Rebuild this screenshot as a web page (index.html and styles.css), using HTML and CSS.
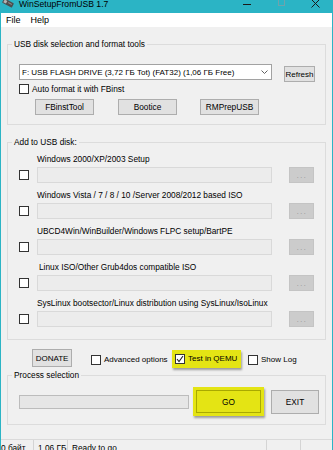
FILE: index.html
```html
<!DOCTYPE html>
<html>
<head>
<meta charset="utf-8">
<link rel="stylesheet" href="styles.css">
</head>
<body>
<div class="window">
  <div class="titlebar">
    <svg class="appicon" width="12" height="9" viewBox="0 0 12 9">
      <g transform="rotate(28 6 4)">
        <rect x="0.5" y="1.5" width="11" height="5" rx="1" fill="#4d4d4d"/>
        <rect x="1.5" y="2.5" width="3" height="3" fill="#b5b5b5"/>
        <rect x="6" y="3" width="4" height="1" fill="#8a8a8a"/>
      </g>
    </svg>
    <span class="title">WinSetupFromUSB 1.7</span>
    <div class="wincontrols">
      <span class="wc"><span class="min"></span></span>
      <span class="wc"><span class="max"></span></span>
      <span class="wc">
        <svg width="9" height="9" viewBox="0 0 9 9"><path d="M0.5 0.5 L8.5 8.5 M8.5 0.5 L0.5 8.5" stroke="#1a1a1a" stroke-width="1" fill="none"/></svg>
      </span>
    </div>
  </div>
  <div class="menubar"><span>File</span><span>Help</span></div>

  <div class="content">
    <div class="group g1">
      <span class="legend">USB disk selection and format tools</span>
      <div class="drive-row">
        <div class="combo">
          <span class="combo-text">F: USB FLASH DRIVE (3,72 ГБ Tot) (FAT32) (1,06 ГБ Free)</span>
          <svg class="chev" width="7" height="4" viewBox="0 0 7 4"><path d="M0.5 0.5 L3.5 3.5 L6.5 0.5" stroke="#606060" fill="none" stroke-width="1"/></svg>
        </div>
        <button class="btn refresh">Refresh</button>
      </div>
      <div class="check auto"><span class="box"></span><span>Auto format it with FBinst</span></div>
      <div class="tools">
        <button class="btn tool">FBinstTool</button>
        <button class="btn tool t2">Bootice</button>
        <button class="btn tool t3">RMPrepUSB</button>
      </div>
    </div>

    <div class="group g2">
      <span class="legend">Add to USB disk:</span>
      <div class="src">
        <div class="src-label">Windows 2000/XP/2003 Setup</div>
        <div class="src-line"><span class="box"></span><span class="path"></span><span class="browse">...</span></div>
      </div>
      <div class="src">
        <div class="src-label">Windows Vista / 7 / 8 / 10 /Server 2008/2012 based ISO</div>
        <div class="src-line"><span class="box"></span><span class="path"></span><span class="browse">...</span></div>
      </div>
      <div class="src">
        <div class="src-label">UBCD4Win/WinBuilder/Windows FLPC setup/BartPE</div>
        <div class="src-line"><span class="box"></span><span class="path"></span><span class="browse">...</span></div>
      </div>
      <div class="src">
        <div class="src-label indent">Linux ISO/Other Grub4dos compatible ISO</div>
        <div class="src-line"><span class="box"></span><span class="path"></span><span class="browse">...</span></div>
      </div>
      <div class="src">
        <div class="src-label">SysLinux bootsector/Linux distribution using SysLinux/IsoLinux</div>
        <div class="src-line"><span class="box"></span><span class="path"></span><span class="browse">...</span></div>
      </div>
    </div>

    <div class="actions">
      <button class="btn donate">DONATE</button>
      <div class="check adv"><span class="box"></span><span>Advanced options</span></div>
      <div class="check qemu">
        <span class="box checked"><svg width="8" height="8" viewBox="0 0 8 8"><path d="M1 4 L3 6.5 L7 1" stroke="#222" stroke-width="1.1" fill="none"/></svg></span>
        <span>Test in QEMU</span>
      </div>
      <div class="check showlog"><span class="box"></span><span>Show Log</span></div>
    </div>

    <div class="group g3">
      <span class="legend">Process selection</span>
      <div class="process-row">
        <div class="progress"></div>
        <div class="go-hl"><button class="go">GO</button></div>
        <button class="btn exit">EXIT</button>
      </div>
    </div>
  </div>

  <div class="statusbar">
    <span class="seg s1">0 байт</span>
    <span class="seg s2">1.06 ГБ</span>
    <span class="seg s3">Ready to go</span>
    <span class="seg s4"></span>
    <span class="seg s5"></span>
  </div>
</div>
</body>
</html>
```

FILE: styles.css
```css
* { box-sizing: border-box; }

body {
  margin: 0;
  font-family: "Liberation Sans", Arial, sans-serif;
  font-size: 8.3px;
  color: #000;
}

.window {
  width: 333px;
  height: 450px;
  border-left: 1px solid #2bb4c5;
  border-right: 1px solid #2bb4c5;
  background: #f0f0f0;
  overflow: hidden;
  display: flex;
  flex-direction: column;
}

/* title bar */
.titlebar {
  height: 13px;
  flex-shrink: 0;
  background: #2bb4c5;
  display: flex;
  align-items: flex-start;
  overflow: hidden;
}
.appicon { margin-left: 1px; margin-top: -1px; flex-shrink: 0; }
.title {
  margin-left: 5px;
  font-size: 8.6px;
  line-height: 10px;
  margin-top: -1px;
  color: #000;
}
.wincontrols { margin-left: auto; display: flex; }
.wc {
  width: 34px;
  height: 13px;
  display: flex;
  justify-content: center;
  align-items: flex-start;
}
.min { width: 8px; height: 1px; background: #1a1a1a; margin-top: 4px; }
.max { width: 7px; height: 7px; border: 1px solid #6fa3ac; margin-top: -1px; }
.wc svg { margin-top: -1px; }

/* menu */
.menubar {
  height: 14px;
  flex-shrink: 0;
  background: #fff;
  display: flex;
  align-items: center;
  padding-left: 5px;
  gap: 10px;
  font-size: 9px;
}

.content { padding: 17px 6px 0; }

.group {
  border: 1px solid #dcdcdc;
  position: relative;
}
.legend {
  position: absolute;
  top: -6px;
  left: 4px;
  padding: 0 2px;
  line-height: 11px;
  background: #f0f0f0;
}

.btn {
  font-family: inherit;
  font-size: 8.3px;
  color: #000;
  background: #e1e1e1;
  border: 1px solid #adadad;
  padding: 0;
  margin: 0;
  display: flex;
  align-items: center;
  justify-content: center;
}

.box {
  width: 10px;
  height: 10px;
  border: 1px solid #333;
  background: #fff;
  flex-shrink: 0;
  display: flex;
  align-items: center;
  justify-content: center;
}

.check {
  display: flex;
  align-items: center;
  gap: 3px;
  height: 10px;
  line-height: 10px;
  white-space: nowrap;
}

/* group 1 */
.g1 { padding: 19px 10px 9px 11px; }
.drive-row { display: flex; align-items: flex-start; height: 18px; }
.combo {
  width: 253px;
  height: 16px;
  border: 1px solid #a2a2a2;
  background: #fff;
  display: flex;
  align-items: center;
  padding-left: 2px;
  white-space: nowrap;
  font-size: 8px;
}
.chev { margin-left: auto; margin-right: 3px; }
.refresh { width: 31px; height: 16px; margin-left: 12px; margin-top: 2px; font-size: 8px; }
.auto { margin-top: 2px; }
.tools { display: flex; margin-top: 5px; padding-left: 16px; }
.tool { width: 59px; height: 16px; }
.t2 { margin-left: 24px; }
.t3 { margin-left: 23px; }

/* group 2 */
.g2 {
  margin-top: 17px;
  padding: 11px 10px 12px 11px;
  display: flex;
  flex-direction: column;
  gap: 7px;
}
.src { display: flex; flex-direction: column; gap: 3px; }
.src-label { line-height: 10px; padding-left: 18px; white-space: nowrap; }
.src-label.indent { padding-left: 20px; }
.src-line { display: flex; align-items: center; height: 16px; }
.path {
  margin-left: 8px;
  width: 235px;
  height: 16px;
  border: 1px solid #d9d9d9;
  background: #ececec;
}
.browse {
  margin-left: 17px;
  width: 25px;
  height: 16px;
  border: 1px solid #c4c4c4;
  background: #cccccc;
  color: #8d8d8d;
  font-size: 7px;
  letter-spacing: 1.5px;
  display: flex;
  align-items: center;
  justify-content: center;
  padding-left: 1px;
}

/* actions */
.actions {
  display: flex;
  align-items: flex-start;
  height: 20px;
  margin-top: 9px;
  padding-left: 25px;
}
.donate { width: 40px; height: 18px; font-size: 8px; }
.adv { width: 81px; margin-left: 19px; margin-top: 6px; font-size: 8px; }
.qemu {
  width: 69px;
  height: 18px;
  margin-top: 1px;
  padding-left: 3px;
  background: #e4e414;
  box-shadow: 1px 2px 2px rgba(0, 0, 0, 0.35);
  font-size: 8px;
}
.showlog { margin-left: 7px; margin-top: 6px; font-size: 8px; }

/* group 3 */
.g3 {
  margin-top: 6px;
  padding: 11px 5px 8px 11px;
}
.process-row { display: flex; align-items: center; }
.progress {
  width: 170px;
  height: 14px;
  border: 1px solid #bcbcbc;
  background: #e6e6e6;
}
.go-hl {
  margin-left: 4px;
  width: 71px;
  height: 29px;
  padding: 3px;
  background: #e4e414;
  box-shadow: 1px 2px 2px rgba(0, 0, 0, 0.35);
}
.go {
  width: 100%;
  height: 100%;
  margin: 0;
  padding: 0;
  border: 1px solid #a9a900;
  background: #e4e414;
  font-family: inherit;
  font-size: 8.3px;
  color: #000;
}
.exit { margin-left: 7px; width: 48px; height: 24px; }

/* status bar */
.statusbar {
  margin-top: auto;
  height: 11px;
  flex-shrink: 0;
  border-top: 1px solid #dadada;
  display: flex;
}
.seg {
  border-right: 1px solid #d4d4d4;
  padding-top: 3px;
  line-height: 10px;
  white-space: nowrap;
}
.s1 { width: 33px; }
.s2 { width: 34px; padding-left: 4px; }
.s3 { width: 199px; padding-left: 4px; }
.s4 { width: 34px; }
.s5 { flex: 1; border-right: none; }
```
